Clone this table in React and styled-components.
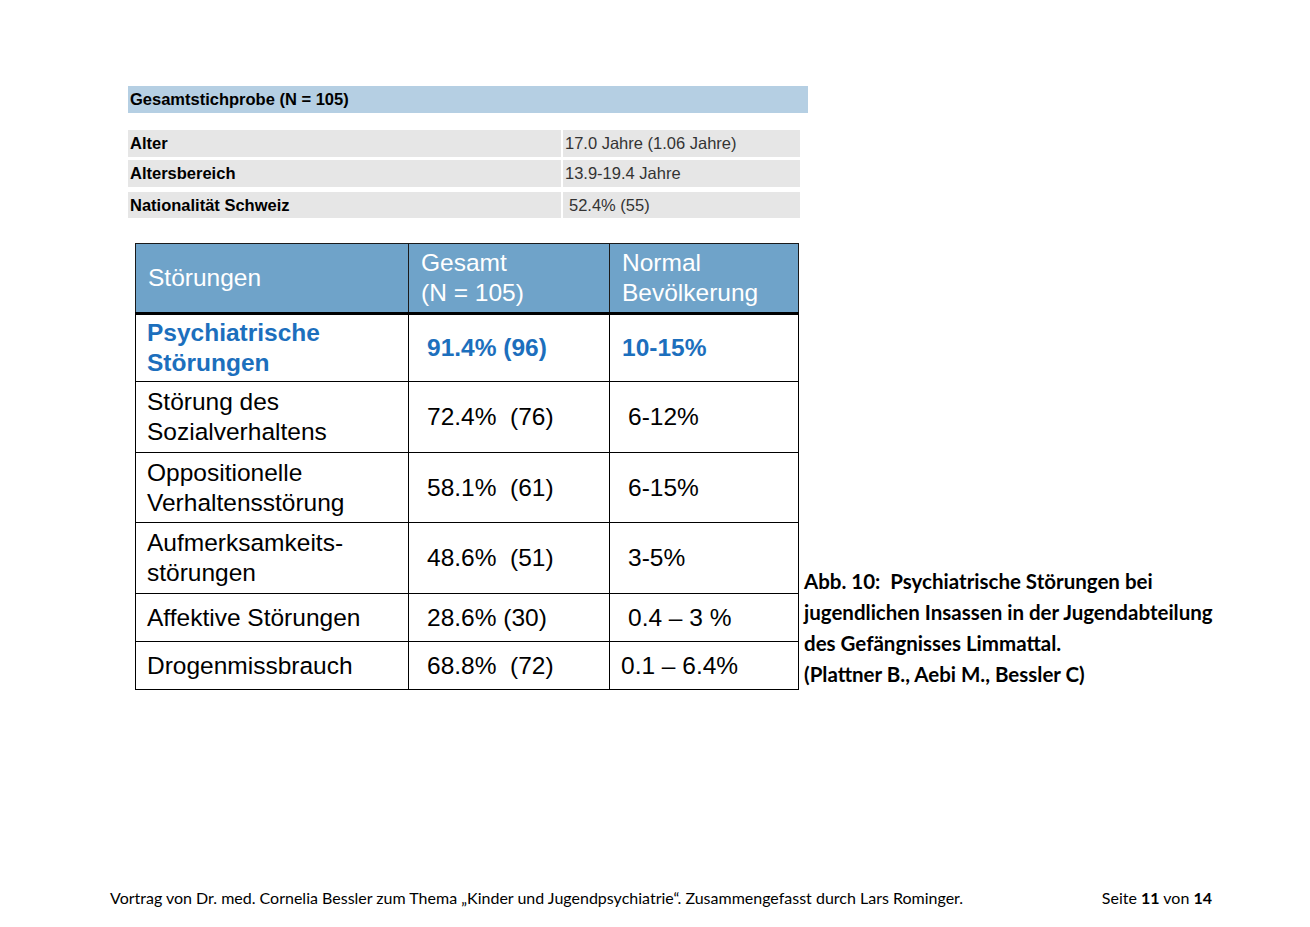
import styled, { createGlobalStyle } from "styled-components";

const GlobalStyle = createGlobalStyle`
  html, body {
    margin: 0;
    padding: 0;
    background: #ffffff;
  }
  body {
    font-family: "Liberation Sans", Arial, sans-serif;
    color: #000;
  }
`;

const Page = styled.div`
  width: 1310px;
  height: 927px;
  box-sizing: border-box;
  padding: 86px 0 0 0;
  display: flex;
  flex-direction: column;
`;

const Summary = styled.section`
  margin-left: 128px;
  width: 680px;
  display: flex;
  flex-direction: column;
`;

const SummaryTitle = styled.div`
  height: 27px;
  background: #b5cfe3;
  display: flex;
  align-items: center;
  padding-left: 2px;
  font-size: 16.5px;
  font-weight: 700;
`;

const InfoGrid = styled.div`
  margin-top: 17px;
  width: 672px;
  display: grid;
  grid-template-columns: 433px 1fr;
  grid-template-rows: 27px 27px 28px;
  row-gap: 3px;
  column-gap: 2px;
`;

const InfoCell = styled.div`
  background: #e6e6e6;
  display: flex;
  align-items: center;
  padding-left: ${(p) => p.$pad || 2}px;
  margin-top: ${(p) => p.$mt || 0}px;
  font-size: 16.5px;
  font-weight: ${(p) => (p.$bold ? 700 : 400)};
  color: ${(p) => (p.$bold ? "#000" : "#333")};
`;

const Figure = styled.div`
  margin-top: 25px;
  margin-left: 135px;
  display: flex;
  align-items: flex-end;
  gap: 5px;
`;

const Table = styled.table`
  border-collapse: collapse;
  table-layout: fixed;
  width: 663px;
`;

const HeadCell = styled.th`
  background: #6fa3c9;
  color: #ffffff;
  font-weight: 400;
  font-size: 24.5px;
  line-height: 30px;
  text-align: left;
  vertical-align: middle;
  height: 68px;
  padding: 0 0 0 ${(p) => p.$pad}px;
  border: 1px solid #1a1a1a;
  border-bottom: 3px solid #000;
`;

const Cell = styled.td`
  font-size: 24.5px;
  line-height: 30px;
  vertical-align: middle;
  height: ${(p) => p.$h}px;
  padding: 0 0 0 ${(p) => p.$pad}px;
  border: 1px solid #000;
  color: ${(p) => (p.$accent ? "#1c6fbd" : "#000")};
  font-weight: ${(p) => (p.$accent ? 700 : 400)};
  white-space: pre;
`;

const Caption = styled.p`
  margin: 0 0 0 0;
  font-family: Lato, "Open Sans", sans-serif;
  font-weight: 700;
  font-size: 20.5px;
  line-height: 31px;
  color: #000;
`;

const Footer = styled.footer`
  margin-top: auto;
  margin-bottom: 20px;
  padding: 0 98px 0 110px;
  display: flex;
  justify-content: space-between;
  font-family: Lato, "Open Sans", sans-serif;
  font-size: 16px;
  color: #000;

  & b {
    font-weight: 700;
  }
`;

const info = [
  ["Alter", "17.0 Jahre (1.06 Jahre)", 2],
  ["Altersbereich", "13.9-19.4 Jahre", 2],
  ["Nationalität Schweiz", "52.4% (55)", 6],
];

const rows = [
  { label: "Psychiatrische\nStörungen", total: "91.4% (96)", normal: "10-15%", h: 66, accent: true, pad2: 18, pad3: 12 },
  { label: "Störung des\nSozialverhaltens", total: "72.4%  (76)", normal: "6-12%", h: 70, pad2: 18, pad3: 18 },
  { label: "Oppositionelle\nVerhaltensstörung", total: "58.1%  (61)", normal: "6-15%", h: 69, pad2: 18, pad3: 18 },
  { label: "Aufmerksamkeits-\nstörungen", total: "48.6%  (51)", normal: "3-5%", h: 70, pad2: 18, pad3: 18 },
  { label: "Affektive Störungen", total: "28.6% (30)", normal: "0.4 – 3 %", h: 47, pad2: 18, pad3: 18 },
  { label: "Drogenmissbrauch", total: "68.8%  (72)", normal: "0.1 – 6.4%", h: 47, pad2: 18, pad3: 11 },
];

export default function App() {
  return (
    <>
      <GlobalStyle />
      <Page>
        <Summary>
          <SummaryTitle>Gesamtstichprobe (N = 105)</SummaryTitle>
          <InfoGrid>
            {info.map(([label, value, pad], i) => [
              <InfoCell key={label} $bold $mt={i === 2 ? 2 : 0}>{label}</InfoCell>,
              <InfoCell key={value} $pad={pad} $mt={i === 2 ? 2 : 0}>{value}</InfoCell>,
            ])}
          </InfoGrid>
        </Summary>

        <Figure>
          <Table>
            <colgroup>
              <col style={{ width: 273 }} />
              <col style={{ width: 201 }} />
              <col style={{ width: 189 }} />
            </colgroup>
            <thead>
              <tr>
                <HeadCell $pad={12}>Störungen</HeadCell>
                <HeadCell $pad={12}>Gesamt<br />(N = 105)</HeadCell>
                <HeadCell $pad={12}>Normal<br />Bevölkerung</HeadCell>
              </tr>
            </thead>
            <tbody>
              {rows.map((r) => (
                <tr key={r.label}>
                  <Cell $h={r.h} $pad={11} $accent={r.accent}>{r.label}</Cell>
                  <Cell $h={r.h} $pad={r.pad2} $accent={r.accent}>{r.total}</Cell>
                  <Cell $h={r.h} $pad={r.pad3} $accent={r.accent}>{r.normal}</Cell>
                </tr>
              ))}
            </tbody>
          </Table>
          <Caption>
            Abb. 10:&nbsp; Psychiatrische Störungen bei<br />
            jugendlichen Insassen in der Jugendabteilung<br />
            des Gefängnisses Limmattal.<br />
            (Plattner B., Aebi M., Bessler C)
          </Caption>
        </Figure>

        <Footer>
          <span>
            Vortrag von Dr. med. Cornelia Bessler zum Thema „Kinder und Jugendpsychiatrie“. Zusammengefasst durch Lars Rominger.
          </span>
          <span>
            Seite <b>11</b> von <b>14</b>
          </span>
        </Footer>
      </Page>
    </>
  );
}
